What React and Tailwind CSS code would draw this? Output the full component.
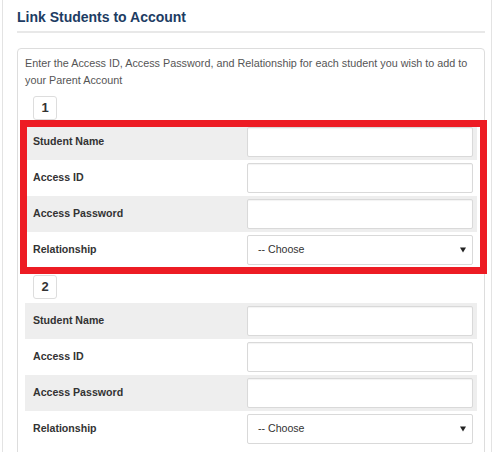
import React from 'react'

const fields = ['Student Name', 'Access ID', 'Access Password', 'Relationship']

function StudentRows() {
    return (
        <div className="flex flex-col">
            {fields.map((label, i) => (
                <div
                    key={label}
                    className={`flex h-[36px] items-center ${i % 2 === 0 ? 'bg-[#eeeeee]' : 'bg-white'}`}
                >
                    <div className="w-[222px] pl-[8px] text-[10.6px] font-bold text-[#333333]">{label}</div>
                    <div className="flex-1 pr-[4px]">
                        {label === 'Relationship' ? (
                            <div className="flex h-[30px] items-center justify-between rounded-[2px] border border-[#d9d9d9] bg-white pl-[10px] pr-[6px] text-[10.6px] text-[#333333]">
                                <span>-- Choose</span>
                                <svg width="6" height="6" viewBox="0 0 7 6">
                                    <path d="M0 0h7L3.5 6z" fill="#222" />
                                </svg>
                            </div>
                        ) : (
                            <div className="h-[30px] rounded-[2px] border border-[#d9d9d9] bg-white shadow-[inset_0_1px_1px_rgba(0,0,0,0.05)]" />
                        )}
                    </div>
                </div>
            ))}
        </div>
    )
}

function StudentBlock({ num, highlight }) {
    return (
        <div>
            <div className="ml-[8px] flex h-[24px] w-[24px] items-center justify-center rounded-[3px] border border-[#dddddd] text-[13px] font-bold text-[#333333]">
                {num}
            </div>
            <div className="relative mt-[4px]">
                <StudentRows />
                {highlight && (
                    <div className="absolute left-[-5px] top-[-4px] h-[154px] w-[467px] border-[7px] border-[#ed1c24]" />
                )}
            </div>
        </div>
    )
}

export default function App() {
    return (
        <div className="h-[452px] w-[500px] overflow-hidden bg-white font-['Liberation_Sans',Arial,sans-serif]">
            <div className="ml-[2px] h-full w-[490px] border-l border-r border-[#e3e3e3] pl-[14px] pr-[6px] pt-[7px]">
                <h2 className="border-b-2 border-[#e8e8e8] pb-[4px] text-[14px] font-bold leading-[20px] text-[#1d3c63]">
                    Link Students to Account
                </h2>
                <div className="mt-[15px] rounded-[4px] border border-[#dddddd] px-[7px] pb-[20px] pt-[6px]">
                    <p className="text-[10.8px] leading-[17px] text-[#555555]">
                        Enter the Access ID, Access Password, and Relationship for each student you wish to add to your Parent Account
                    </p>
                    <div className="mt-[7px] flex flex-col gap-[7px]">
                        <StudentBlock num="1" highlight />
                        <StudentBlock num="2" />
                    </div>
                </div>
            </div>
        </div>
    )
}
